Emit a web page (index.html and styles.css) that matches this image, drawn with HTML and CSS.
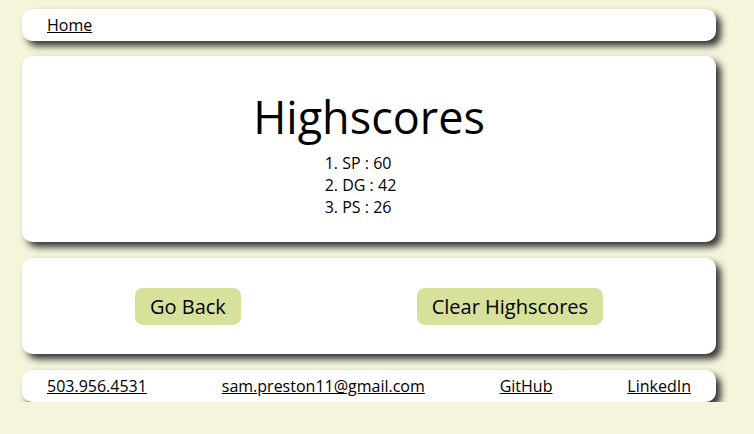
FILE: index.html
```html
<!DOCTYPE html>
<html lang="en">
<head>
<meta charset="utf-8">
<title>Highscores</title>
<link rel="stylesheet" href="styles.css">
</head>
<body>
<div class="page">
  <header class="card bar">
    <a href="#">Home</a>
  </header>
  <main class="card scores">
    <h1 class="title">Highscores</h1>
    <ol class="list">
      <li>SP : 60</li>
      <li>DG : 42</li>
      <li>PS : 26</li>
    </ol>
  </main>
  <section class="card actions">
    <button class="btn">Go Back</button>
    <button class="btn">Clear Highscores</button>
  </section>
  <footer class="card bar footer">
    <a href="#">503.956.4531</a>
    <a href="#">sam.preston11@gmail.com</a>
    <a href="#">GitHub</a>
    <a href="#">LinkedIn</a>
  </footer>
</div>
</body>
</html>
```
FILE: styles.css
```css
html, body {
  margin: 0;
  padding: 0;
  background: #f5f5dc;
}
body {
  font-family: "Open Sans", "DejaVu Sans", sans-serif;
  color: #000;
  font-size: 16px;
}
.page {
  width: 694px;
  margin: 9px 0 0 22px;
  display: flex;
  flex-direction: column;
  gap: 15px;
}
.card {
  background: #fff;
  border-radius: 10px;
  box-shadow: 5px 5px 7px #333;
  box-sizing: border-box;
}
.bar {
  height: 32px;
  padding: 0 25px;
  display: flex;
  align-items: center;
}
.bar a {
  color: #000;
  text-decoration: underline;
  line-height: 22px;
}
.scores {
  padding: 30px 25px 24px;
  display: flex;
  flex-direction: column;
  align-items: center;
}
.title {
  margin: 0;
  font-size: 45px;
  font-weight: 400;
  line-height: 61px;
}
.list {
  margin: 5px 0 0;
  padding: 0 17px 0 0;
  list-style-position: inside;
  line-height: 22px;
}
.actions {
  height: 96px;
  margin-top: 1px;
  padding: 0 25px;
  display: flex;
  justify-content: space-around;
  align-items: center;
}
.btn {
  font-family: "Open Sans", "DejaVu Sans", sans-serif;
  font-size: 20px;
  line-height: 27px;
  padding: 5px 15px;
  border: none;
  border-radius: 8px;
  background: #d7e19c;
  color: #000;
}
.footer {
  margin-top: 1px;
  justify-content: space-between;
}
```
